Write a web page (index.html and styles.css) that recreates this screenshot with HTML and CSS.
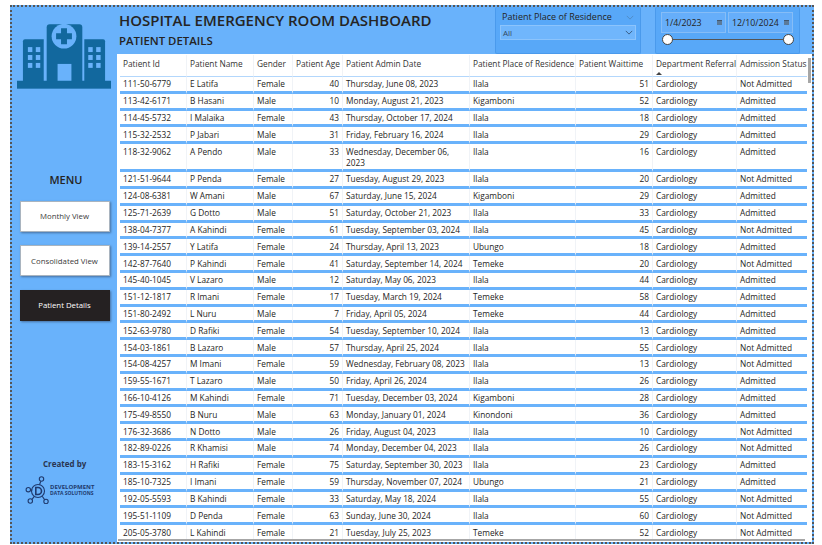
FILE: index.html
```html
<!DOCTYPE html>
<html lang="en">
<head>
  <meta charset="UTF-8">
  <meta name="viewport" content="width=device-width, initial-scale=1.0">
  <title>Hospital Emergency Room Dashboard</title>
  <link rel="stylesheet" href="styles.css">
</head>
<body>
  <div class="canvas">
    <aside class="sidebar">
      <svg class="hospital-icon" viewBox="0 0 96 66" aria-hidden="true">
        <rect x="0" y="57" width="95" height="8" fill="#12689e"/>
        <path d="M30 58V3a3 3 0 0 1 3-3h30a3 3 0 0 1 3 3v55z" fill="#12689e"/>
        <path d="M6 58V17a2 2 0 0 1 2-2h19v43z" fill="#12689e"/>
        <path d="M68 58V15h19a2 2 0 0 1 2 2v41z" fill="#12689e"/>
        <circle cx="47.5" cy="12" r="12.5" fill="#69b2fb"/>
        <path d="M44.5 4h6v5h5v6h-5v5h-6v-5h-5V9h5z" fill="#12689e"/>
        <rect x="41" y="40" width="14" height="17" fill="#69b2fb"/>
        <g fill="#69b2fb">
          <rect x="11" y="23" width="4.5" height="5"/><rect x="19" y="23" width="4.5" height="5"/>
          <rect x="11" y="31" width="4.5" height="5"/><rect x="19" y="31" width="4.5" height="5"/>
          <rect x="11" y="39" width="4.5" height="5"/><rect x="19" y="39" width="4.5" height="5"/>
          <rect x="72" y="23" width="4.5" height="5"/><rect x="80" y="23" width="4.5" height="5"/>
          <rect x="72" y="31" width="4.5" height="5"/><rect x="80" y="31" width="4.5" height="5"/>
          <rect x="72" y="39" width="4.5" height="5"/><rect x="80" y="39" width="4.5" height="5"/>
        </g>
      </svg>

      <div class="menu-title">MENU</div>
      <div class="menu-btn">Monthly View</div>
      <div class="menu-btn">Consolidated View</div>
      <div class="menu-btn active">Patient Details</div>

      <div class="created">Created by</div>
      <div class="logo">
        <svg class="logo-mark" viewBox="0 0 24 28" aria-hidden="true">
          <g fill="none" stroke="#1f3a6e" stroke-width="1.1">
            <circle cx="13" cy="15" r="6.5"/>
            <circle cx="16.5" cy="3" r="2.2"/>
            <circle cx="3.3" cy="13.7" r="2.2"/>
            <circle cx="5.3" cy="25" r="2.2"/>
            <circle cx="21" cy="25.5" r="2.2"/>
            <path d="M15.8 5.2l-1.3 3.6M5.5 14h2M7 23.3l2.3-3M19.6 23.6l-2.4-3.4"/>
            <path d="M10.8 11.5h2.2a3.5 3.5 0 0 1 0 7h-2.2z" stroke-width="1.6"/>
          </g>
        </svg>
        <div class="logo-text">
          <span class="logo-top">DEVELOPMENT</span>
          <span class="logo-sub">DATA SOLUTIONS</span>
        </div>
      </div>
    </aside>

    <main class="content">
      <header class="topbar">
        <div class="titles">
          <h1>HOSPITAL EMERGENCY ROOM DASHBOARD</h1>
          <h2>PATIENT DETAILS</h2>
        </div>
        <div class="slicer place">
          <div class="slicer-head">
            <span>Patient Place of Residence</span>
            <svg class="chev faint" viewBox="0 0 10 6"><path d="M1 1l4 4 4-4" fill="none" stroke="currentColor"/></svg>
          </div>
          <div class="dropdown">
            <span>All</span>
            <svg class="chev" viewBox="0 0 10 6"><path d="M1 1l4 4 4-4" fill="none" stroke="currentColor"/></svg>
          </div>
        </div>
        <div class="slicer dates">
          <div class="date-row">
            <div class="date-box"><span>1/4/2023</span><i class="cal"></i></div>
            <div class="date-box"><span>12/10/2024</span><i class="cal"></i></div>
          </div>
          <div class="range">
            <span class="knob left"></span>
            <span class="knob right"></span>
          </div>
        </div>
      </header>

      <section class="panel">
        <table class="grid">
          <colgroup>
            <col class="c-id"><col class="c-name"><col class="c-gender"><col class="c-age"><col class="c-date">
            <col class="c-place"><col class="c-wait"><col class="c-dept"><col class="c-status">
          </colgroup>
          <thead>
            <tr>
              <th>Patient Id</th><th>Patient Name</th><th>Gender</th><th class="num">Patient Age</th><th>Patient Admin Date</th>
              <th>Patient Place of Residence</th><th>Patient Waittime</th><th class="sorted">Department Referral</th><th>Admission Status</th>
            </tr>
          </thead>
          <tbody>
            <tr><td>111-50-6779</td><td>E Latifa</td><td>Female</td><td class="num">40</td><td>Thursday, June 08, 2023</td><td>Ilala</td><td class="num">51</td><td>Cardiology</td><td>Not Admitted</td></tr>
            <tr><td>113-42-6171</td><td>B Hasani</td><td>Male</td><td class="num">10</td><td>Monday, August 21, 2023</td><td>Kigamboni</td><td class="num">52</td><td>Cardiology</td><td>Admitted</td></tr>
            <tr><td>114-45-5732</td><td>I Malaika</td><td>Female</td><td class="num">43</td><td>Thursday, October 17, 2024</td><td>Ilala</td><td class="num">18</td><td>Cardiology</td><td>Admitted</td></tr>
            <tr><td>115-32-2532</td><td>P Jabari</td><td>Male</td><td class="num">31</td><td>Friday, February 16, 2024</td><td>Ilala</td><td class="num">29</td><td>Cardiology</td><td>Admitted</td></tr>
            <tr><td>118-32-9062</td><td>A Pendo</td><td>Male</td><td class="num">33</td><td>Wednesday, December 06,<br>2023</td><td>Ilala</td><td class="num">16</td><td>Cardiology</td><td>Admitted</td></tr>
            <tr><td>121-51-9644</td><td>P Penda</td><td>Female</td><td class="num">27</td><td>Tuesday, August 29, 2023</td><td>Ilala</td><td class="num">20</td><td>Cardiology</td><td>Not Admitted</td></tr>
            <tr><td>124-08-6381</td><td>W Amani</td><td>Male</td><td class="num">67</td><td>Saturday, June 15, 2024</td><td>Kigamboni</td><td class="num">29</td><td>Cardiology</td><td>Admitted</td></tr>
            <tr><td>125-71-2639</td><td>G Dotto</td><td>Male</td><td class="num">51</td><td>Saturday, October 21, 2023</td><td>Ilala</td><td class="num">33</td><td>Cardiology</td><td>Admitted</td></tr>
            <tr><td>138-04-7377</td><td>A Kahindi</td><td>Female</td><td class="num">61</td><td>Tuesday, September 03, 2024</td><td>Ilala</td><td class="num">45</td><td>Cardiology</td><td>Not Admitted</td></tr>
            <tr><td>139-14-2557</td><td>Y Latifa</td><td>Female</td><td class="num">24</td><td>Thursday, April 13, 2023</td><td>Ubungo</td><td class="num">18</td><td>Cardiology</td><td>Admitted</td></tr>
            <tr><td>142-87-7640</td><td>P Kahindi</td><td>Female</td><td class="num">41</td><td>Saturday, September 14, 2024</td><td>Temeke</td><td class="num">20</td><td>Cardiology</td><td>Not Admitted</td></tr>
            <tr><td>145-40-1045</td><td>V Lazaro</td><td>Male</td><td class="num">12</td><td>Saturday, May 06, 2023</td><td>Ilala</td><td class="num">44</td><td>Cardiology</td><td>Admitted</td></tr>
            <tr><td>151-12-1817</td><td>R Imani</td><td>Female</td><td class="num">17</td><td>Tuesday, March 19, 2024</td><td>Temeke</td><td class="num">58</td><td>Cardiology</td><td>Admitted</td></tr>
            <tr><td>151-80-2492</td><td>L Nuru</td><td>Male</td><td class="num">7</td><td>Friday, April 05, 2024</td><td>Temeke</td><td class="num">44</td><td>Cardiology</td><td>Admitted</td></tr>
            <tr><td>152-63-9780</td><td>D Rafiki</td><td>Female</td><td class="num">54</td><td>Tuesday, September 10, 2024</td><td>Ilala</td><td class="num">13</td><td>Cardiology</td><td>Admitted</td></tr>
            <tr><td>154-03-1861</td><td>B Lazaro</td><td>Male</td><td class="num">57</td><td>Thursday, April 25, 2024</td><td>Ilala</td><td class="num">55</td><td>Cardiology</td><td>Not Admitted</td></tr>
            <tr><td>154-08-4257</td><td>M Imani</td><td>Female</td><td class="num">59</td><td>Wednesday, February 08, 2023</td><td>Ilala</td><td class="num">13</td><td>Cardiology</td><td>Not Admitted</td></tr>
            <tr><td>159-55-1671</td><td>T Lazaro</td><td>Male</td><td class="num">50</td><td>Friday, April 26, 2024</td><td>Ilala</td><td class="num">26</td><td>Cardiology</td><td>Admitted</td></tr>
            <tr><td>166-10-4126</td><td>M Kahindi</td><td>Female</td><td class="num">71</td><td>Tuesday, December 03, 2024</td><td>Kigamboni</td><td class="num">28</td><td>Cardiology</td><td>Admitted</td></tr>
            <tr><td>175-49-8550</td><td>B Nuru</td><td>Male</td><td class="num">63</td><td>Monday, January 01, 2024</td><td>Kinondoni</td><td class="num">36</td><td>Cardiology</td><td>Admitted</td></tr>
            <tr><td>176-32-3686</td><td>N Dotto</td><td>Male</td><td class="num">26</td><td>Friday, August 04, 2023</td><td>Ilala</td><td class="num">10</td><td>Cardiology</td><td>Not Admitted</td></tr>
            <tr><td>182-89-0226</td><td>R Khamisi</td><td>Male</td><td class="num">74</td><td>Monday, December 04, 2023</td><td>Ilala</td><td class="num">26</td><td>Cardiology</td><td>Not Admitted</td></tr>
            <tr><td>183-15-3162</td><td>H Rafiki</td><td>Female</td><td class="num">75</td><td>Saturday, September 30, 2023</td><td>Ilala</td><td class="num">23</td><td>Cardiology</td><td>Admitted</td></tr>
            <tr><td>185-10-7325</td><td>I Imani</td><td>Female</td><td class="num">59</td><td>Thursday, November 07, 2024</td><td>Ubungo</td><td class="num">21</td><td>Cardiology</td><td>Admitted</td></tr>
            <tr><td>192-05-5593</td><td>B Kahindi</td><td>Female</td><td class="num">33</td><td>Saturday, May 18, 2024</td><td>Ilala</td><td class="num">55</td><td>Cardiology</td><td>Not Admitted</td></tr>
            <tr><td>195-51-1109</td><td>D Penda</td><td>Female</td><td class="num">63</td><td>Sunday, June 30, 2024</td><td>Ilala</td><td class="num">60</td><td>Cardiology</td><td>Not Admitted</td></tr>
            <tr><td>205-05-3780</td><td>L Kahindi</td><td>Female</td><td class="num">21</td><td>Tuesday, July 25, 2023</td><td>Temeke</td><td class="num">52</td><td>Cardiology</td><td>Not Admitted</td></tr>
          </tbody>
        </table>
        <div class="scroll-v"></div>
        <div class="scroll-h"></div>
      </section>
    </main>
  </div>
</body>
</html>
```

FILE: styles.css
```css
html, body {
  margin: 0;
  height: 100%;
  background-color: #ffffff;
  overflow: hidden;
}

body {
  font-family: "Open Sans", "Noto Sans", Arial, sans-serif;
  color: #252423;
}

.canvas {
  display: flex;
  box-sizing: border-box;
  width: 804px;
  height: 539px;
  margin: 5px 0 0 10px;
  border: 2px dotted #555555;
  background-color: #69b2fb;
}

/* left menu column */
.sidebar {
  display: flex;
  flex-direction: column;
  align-items: center;
  width: 105px;
  flex-shrink: 0;
}

.hospital-icon {
  width: 95px;
  height: 66px;
  margin-top: 17px;
}

.menu-title {
  margin-top: 83px;
  margin-left: 3px;
  font-size: 11px;
  line-height: 14px;
  font-weight: 600;
  color: #252423;
}

.menu-btn {
  display: flex;
  align-items: center;
  justify-content: center;
  box-sizing: border-box;
  width: 90px;
  height: 31px;
  margin-top: 13.5px;
  background-color: #ffffff;
  border: 1px solid #a9b4bf;
  box-shadow: 1px 1px 2px rgba(40, 60, 90, 0.55);
  font-size: 7.8px;
  color: #3a3a3a;
}

.menu-btn.active {
  background-color: #252122;
  border-color: #252122;
  color: #ffffff;
}

.created {
  align-self: flex-start;
  margin-top: 137px;
  margin-left: 31px;
  font-size: 8px;
  line-height: 11px;
  font-weight: 700;
  color: #2a3550;
}

.logo {
  display: flex;
  align-items: center;
  align-self: flex-start;
  gap: 1px;
  margin-top: 7px;
  margin-left: 13px;
}

.logo-mark {
  width: 24px;
  height: 28px;
}

.logo-text {
  display: flex;
  flex-direction: column;
  color: #1f3a6e;
  font-weight: 700;
  line-height: 6px;
}

.logo-top {
  font-size: 6px;
}

.logo-sub {
  font-size: 5px;
}

/* right side */
.content {
  display: flex;
  flex-direction: column;
  flex: 1;
  min-width: 0;
}

.topbar {
  display: flex;
  height: 47px;
  flex-shrink: 0;
}

.titles {
  flex: 1;
  padding-left: 2px;
}

h1 {
  margin: 3px 0 0;
  font-size: 15px;
  line-height: 20px;
  font-weight: 600;
  color: #252423;
}

h2 {
  margin: 3px 0 0;
  font-size: 11.4px;
  line-height: 15px;
  font-weight: 600;
  color: #252423;
}

.slicer {
  box-sizing: border-box;
  height: 47px;
  background-color: #58a8f8;
  border: 1px solid #4a9aec;
  border-top: none;
  border-radius: 2px;
}

.slicer.place {
  width: 146px;
  padding: 4px 4px 0;
}

.slicer.dates {
  width: 145px;
  margin: 0 12px 0 14px;
  padding: 5px 5px 0;
}

.slicer-head {
  display: flex;
  align-items: center;
  justify-content: space-between;
  padding: 0 2px;
  font-size: 9px;
  line-height: 12px;
  font-weight: 500;
  color: #252423;
}

.chev {
  width: 8px;
  height: 5px;
  flex-shrink: 0;
  color: #2d4a6b;
}

.chev.faint {
  color: #4f86bd;
}

.dropdown {
  display: flex;
  align-items: center;
  justify-content: space-between;
  box-sizing: border-box;
  height: 15px;
  margin-top: 2px;
  padding: 0 2px;
  background-color: #70b6fc;
  border: 1px solid #8cc4fc;
  font-size: 8px;
  color: #33475c;
}

.date-row {
  display: flex;
  gap: 2px;
}

.date-box {
  display: flex;
  align-items: center;
  justify-content: space-between;
  box-sizing: border-box;
  width: 65px;
  height: 21px;
  padding: 0 3px;
  background-color: #66aefa;
  border: 1px solid #86bdf7;
  font-size: 8.8px;
  color: #252423;
}

.cal {
  display: block;
  width: 5px;
  height: 4px;
  background-color: #5b7a9a;
  border-top: 1px solid #40566e;
}

.range {
  position: relative;
  height: 1px;
  margin: 6px 5px 0 6px;
  background-color: #555555;
}

.knob {
  position: absolute;
  top: -5px;
  box-sizing: border-box;
  width: 11px;
  height: 11px;
  background-color: #ffffff;
  border: 1px solid #444444;
  border-radius: 50%;
}

.knob.left {
  left: -5px;
}

.knob.right {
  right: -5px;
}

/* table panel */
.panel {
  position: relative;
  flex: 1;
  overflow: hidden;
  box-sizing: border-box;
  padding: 1px 5px 0 3px;
  background-color: #ffffff;
}

.grid {
  table-layout: fixed;
  width: 687px;
  border-collapse: separate;
  border-spacing: 0;
  font-size: 8.3px;
  color: #252423;
}

.c-id { width: 67px; }
.c-name { width: 67px; }
.c-gender { width: 39px; }
.c-age { width: 50px; }
.c-date { width: 127px; }
.c-place { width: 106px; }
.c-wait { width: 77px; }
.c-dept { width: 84px; }
.c-status { width: 70px; }

.grid th {
  height: 22px;
  box-sizing: border-box;
  padding: 3px 3px 0;
  vertical-align: top;
  text-align: left;
  font-weight: 400;
  line-height: 12px;
  white-space: nowrap;
  color: #333333;
  border-right: 1px solid #f0f3f7;
  border-bottom: 1px solid #b3d7fc;
}

.grid th.num {
  text-align: right;
}

.grid th.sorted {
  position: relative;
}

.grid th.sorted::after {
  content: "";
  position: absolute;
  left: 3px;
  bottom: 1px;
  border-left: 3px solid transparent;
  border-right: 3px solid transparent;
  border-bottom: 3px solid #444444;
}

.grid td {
  padding: 1.4px 3px 1.43px;
  vertical-align: top;
  line-height: 11px;
  white-space: nowrap;
  border-right: 1px solid #f0f3f7;
  border-bottom: 3px solid #69b2fb;
}

.grid th:last-child,
.grid td:last-child {
  border-right: none;
}

.grid td.num {
  text-align: right;
}

.grid tr:last-child td {
  border-bottom: none;
}

.scroll-v {
  position: absolute;
  top: 4px;
  right: 1px;
  width: 3px;
  height: 25px;
  background-color: #a6a6a6;
}

.scroll-h {
  position: absolute;
  left: 1px;
  right: 7px;
  bottom: 1px;
  height: 2px;
  background-color: #a6a6a6;
}
```
